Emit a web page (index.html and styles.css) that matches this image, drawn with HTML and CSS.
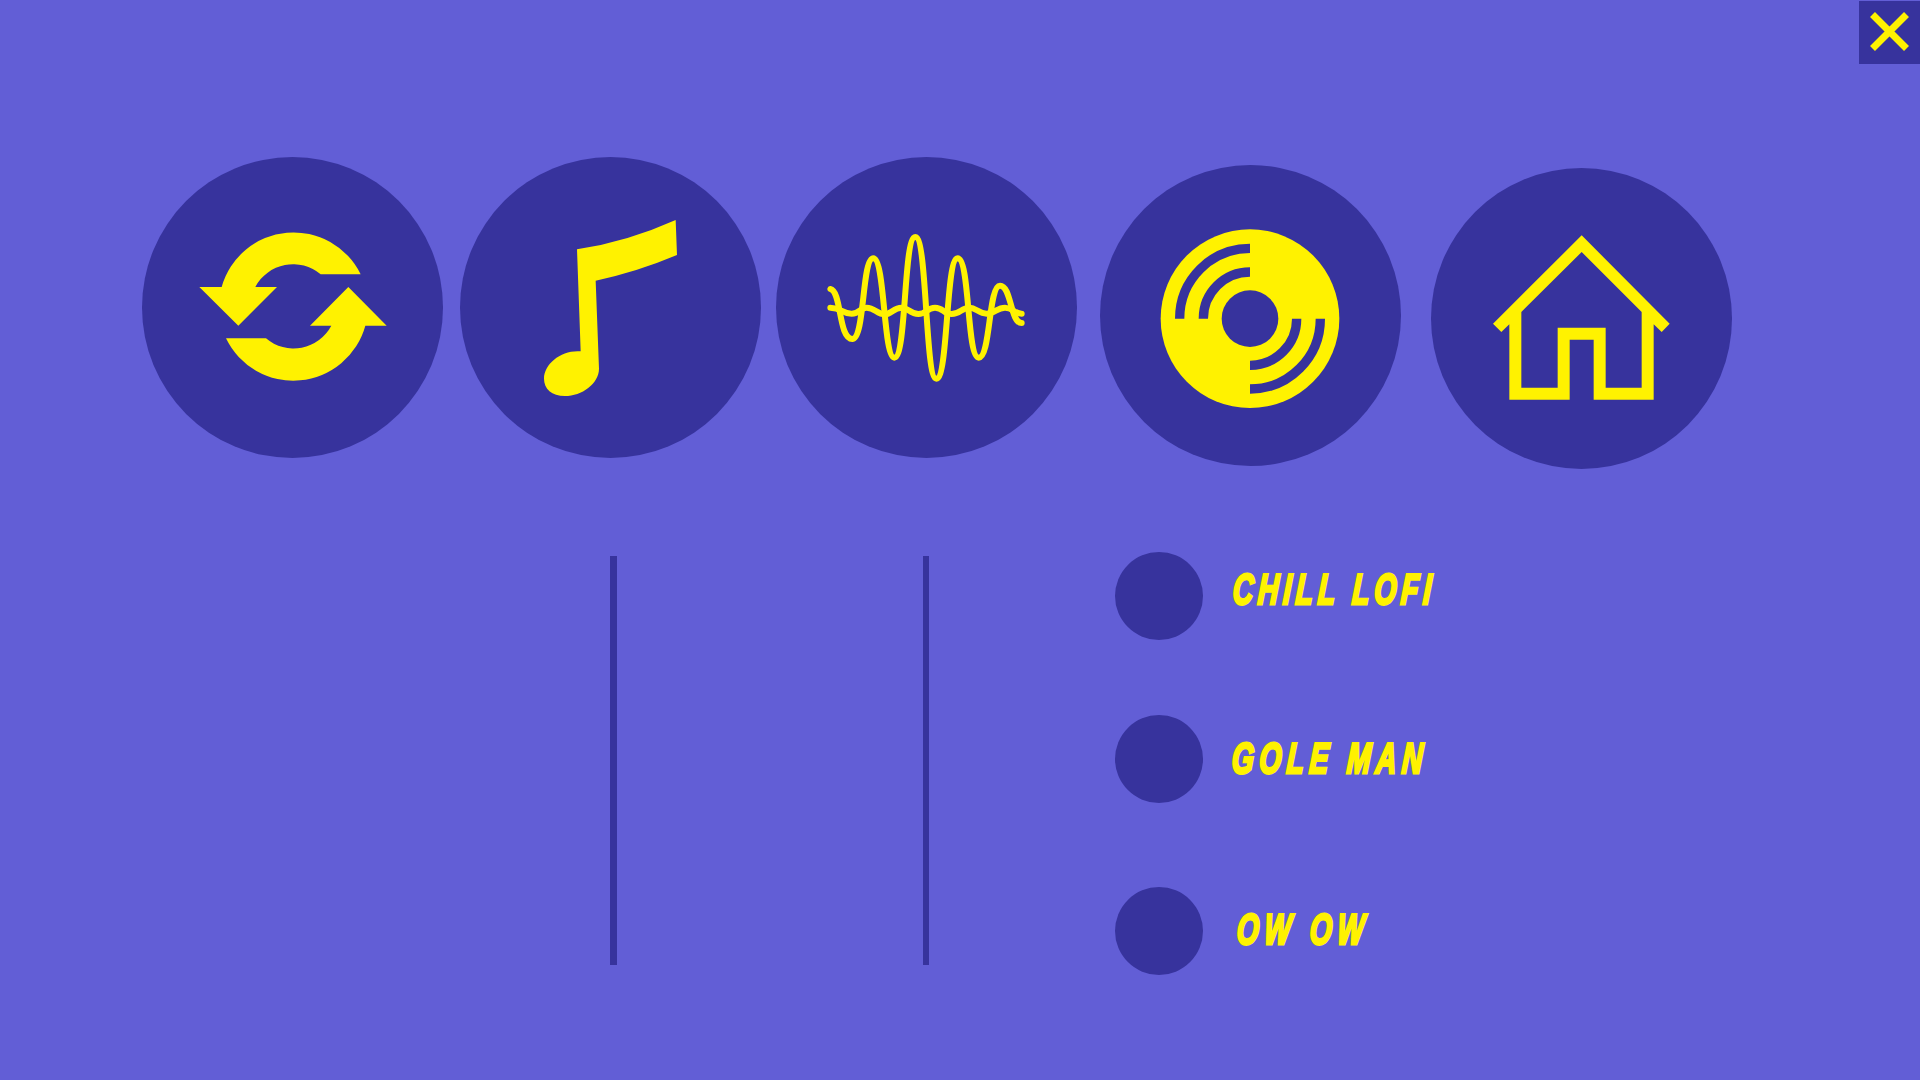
FILE: index.html
```html
<!DOCTYPE html>
<html lang="en">
<head>
<meta charset="utf-8">
<title>Radio</title>
<link rel="stylesheet" href="styles.css">
</head>
<body>
<main class="page">
  <header class="topbar">
    <button class="close" aria-label="Close">
      <svg class="close-icon" viewBox="0 0 61 63"><path d="M13.5 13.5 L47.5 47.5 M47.5 13.5 L13.5 47.5"/></svg>
    </button>
  </header>
  <nav class="modes">
    <div class="mode mode-refresh">
      <svg class="icon" viewBox="36 50 903 903"><path d="M692 402 A224 224 0 0 0 275 440 L208 440 L325 556 L441 440 L376 440 A128 128 0 0 1 572 402 Z M288 594 A224 224 0 0 0 706 556 L770 556 L655 440 L540 556 L604 556 A128 128 0 0 1 408 594 Z"/></svg>
    </div>
    <div class="mode mode-note">
      <svg class="icon" viewBox="30 50 903 903"><path d="M381 327 Q530 305 677 239 L681 344 Q560 395 437 421 L447 685 C447 730 395 767 345 767 C305 767 282 745 282 715 C282 670 335 628 392 633 Z"/></svg>
    </div>
    <div class="mode mode-wave">
      <svg class="icon" viewBox="18 50 903 903"><g class="wave"><path d="M181 446 C215 452 205 596 247 596 C285 596 275 354 310 354 C345 354 340 652 373 652 C410 652 400 290 436 290 C472 290 465 715 499 715 C535 715 527 354 563 354 C600 354 590 652 626 652 C662 652 655 436 690 436 C725 436 720 548 755 548"/><path d="M181 502 C215 502 215 520 245 520 C270 520 270 502 290 502 C315 502 320 522 345 522 C365 522 370 502 395 502 C415 502 420 521 445 521 C470 521 470 502 495 502 C520 502 520 521 545 521 C570 521 575 502 597 502 C620 502 625 520 650 520 C675 520 680 502 705 502 C730 502 730 520 755 520"/></g></svg>
    </div>
    <div class="mode mode-disc">
      <svg class="icon" viewBox="30 44 903 903"><circle cx="480" cy="505" r="268"/><circle class="dark" cx="480" cy="505" r="85"/><path class="groove" d="M269 505 A211 211 0 0 1 480 294 M340 505 A140 140 0 0 1 480 365 M691 505 A211 211 0 0 1 480 716 M620 505 A140 140 0 0 1 480 645"/></svg>
    </div>
    <div class="mode mode-home">
      <svg class="icon" viewBox="33 53 903 903"><path fill-rule="evenodd" d="M485 255 L749 520 L725 545 L701 522 L701 748 L521 748 L521 568 L449 568 L449 748 L268 748 L268 522 L244 545 L219 520 Z M485 305 L304 485 L304 712 L413 712 L413 532 L557 532 L557 712 L665 712 L665 485 Z"/></svg>
    </div>
  </nav>
  <section class="panel">
    <div class="rule rule-a"></div>
    <div class="rule rule-b"></div>
    <ul class="tracks">
      <li class="track track-1"><span class="dot"></span><span class="label">CHILL LOFI</span></li>
      <li class="track track-2"><span class="dot"></span><span class="label">GOLE MAN</span></li>
      <li class="track track-3"><span class="dot"></span><span class="label">OW OW</span></li>
    </ul>
  </section>
</main>
</body>
</html>
```
FILE: styles.css
```css
* { box-sizing: border-box; }
html, body { margin: 0; height: 100%; }
body { background: #625ed6; overflow: hidden; }
.page { width: 1920px; height: 1080px; display: flex; flex-direction: column; }
.topbar { display: flex; justify-content: flex-end; padding-top: 1px; }
.close { width: 61px; height: 63px; padding: 0; border: 0; background: #37339d; display: block; }
.close-icon { display: block; width: 61px; height: 63px; }
.close-icon path { stroke: #fff200; stroke-width: 7; fill: none; }
.modes { display: flex; align-items: flex-start; height: 312px; margin-top: 93px; padding-left: 142px; }
.mode { width: 301px; height: 301px; border-radius: 50%; background: #37339d; flex: none; }
.mode-note { margin-left: 17px; }
.mode-wave { margin-left: 15px; }
.mode-disc { margin-left: 23px; margin-top: 8px; }
.mode-home { margin-left: 30px; margin-top: 11px; }
.icon { display: block; width: 301px; height: 301px; fill: #fff200; }
.icon .dark { fill: #37339d; }
.icon .groove { fill: none; stroke: #37339d; stroke-width: 28; }
.wave path { fill: none; stroke: #fff200; stroke-width: 18; stroke-linecap: round; }
.panel { display: flex; align-items: flex-start; margin-top: 83px; padding-left: 610px; }
.rule { background: #37339d; height: 409px; margin-top: 4px; flex: none; }
.rule-a { width: 7px; }
.rule-b { width: 6px; margin-left: 306px; }
.tracks { list-style: none; margin: 0 0 0 186px; padding: 0; }
.track { display: flex; align-items: flex-start; height: 88px; }
.track-2 { margin-top: 75px; }
.track-3 { margin-top: 84px; }
.dot { width: 88px; height: 88px; border-radius: 50%; background: #37339d; flex: none; }
.label {
  font-family: "Liberation Sans", sans-serif;
  font-weight: 700; font-style: italic; font-size: 43px; line-height: 50px;
  letter-spacing: 7.2px; white-space: nowrap; color: #fff200;
  -webkit-text-stroke: 3px #fff200;
  margin-left: 30px;
  transform: scaleX(.66) skewX(-6deg);
  transform-origin: left center;
}
.track-1 .label { margin-top: 12px; }
.track-2 .label { margin-top: 18px; margin-left: 29px; letter-spacing: 8.2px; }
.track-3 .label { margin-top: 17px; margin-left: 34px; letter-spacing: 8.2px; }
```
